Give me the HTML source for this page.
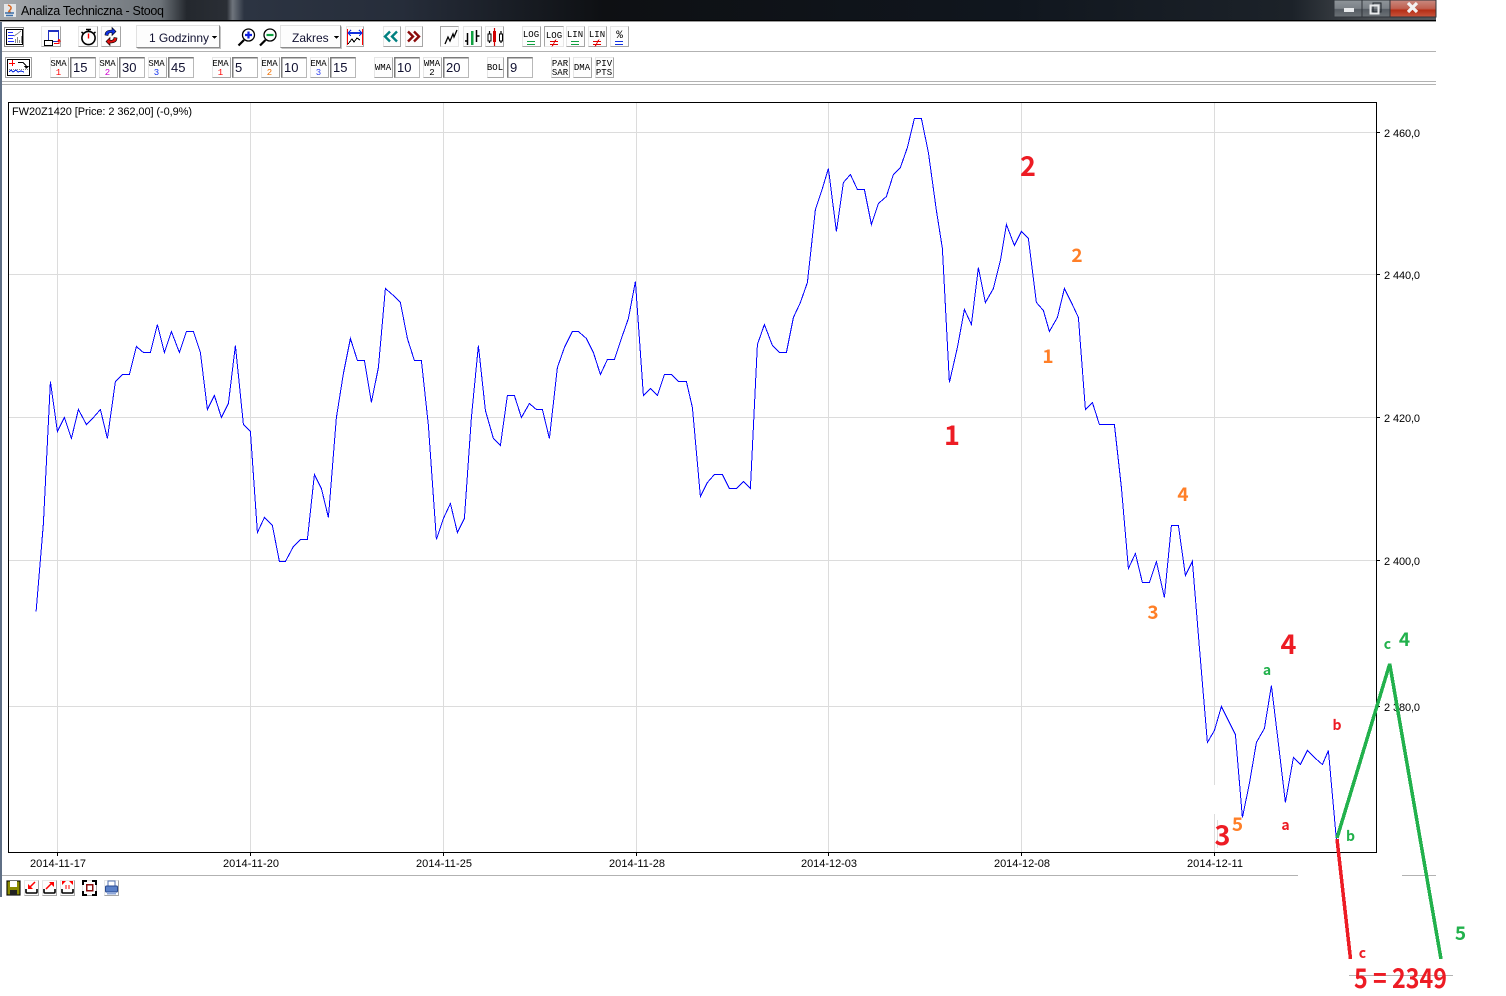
<!DOCTYPE html>
<html><head><meta charset="utf-8"><title>Analiza Techniczna - Stooq</title>
<style>
html,body{margin:0;padding:0;background:#fff;width:1506px;height:996px;overflow:hidden}
svg{position:absolute;left:0;top:0;display:block}
.b{fill:#fdfdfd;stroke:#e6e6e6;stroke-width:1}
.s{fill:none;stroke:#a6a6a6;stroke-width:1}
.i{fill:#fff;stroke:#b8b8b8;stroke-width:1}
.d{fill:none;stroke:#7c7c7c;stroke-width:1.5}
.t{font:13px "Liberation Sans",sans-serif;fill:#101030}
.m{font:9px "Liberation Mono",monospace;fill:#000;text-anchor:middle}
.a{font:11px "Liberation Sans",sans-serif;fill:#000}
.l{font-family:"Noto Sans CJK JP","Liberation Sans",sans-serif;font-weight:700;text-anchor:middle}
.r{fill:#ed1c24}.o{fill:#ff7f27}.g{fill:#22b14c}
.c{shape-rendering:crispEdges}
</style></head><body>
<svg width="1506" height="996" viewBox="0 0 1506 996" xmlns="http://www.w3.org/2000/svg">
<defs>
<linearGradient id="tb" x1="0" x2="1436" y1="0" y2="0" gradientUnits="userSpaceOnUse">
<stop offset="0" stop-color="#a4a8ac"/><stop offset=".05" stop-color="#8c9196"/><stop offset=".112" stop-color="#6c7278"/><stop offset=".13" stop-color="#24282e"/><stop offset=".158" stop-color="#2a2e35"/><stop offset=".162" stop-color="#6f757d"/><stop offset=".17" stop-color="#2c3442"/><stop offset=".28" stop-color="#262d3a"/><stop offset=".42" stop-color="#0e1013"/><stop offset=".7" stop-color="#10161e"/><stop offset=".9" stop-color="#1c2229"/><stop offset=".96" stop-color="#4c5054"/><stop offset="1" stop-color="#55585c"/>
</linearGradient>
<linearGradient id="bt" x1="0" x2="0" y1="0" y2="1"><stop offset="0" stop-color="#8f959a"/><stop offset=".5" stop-color="#7b8187"/><stop offset=".55" stop-color="#565c63"/><stop offset="1" stop-color="#6c7277"/></linearGradient>
<linearGradient id="rd" x1="0" x2="0" y1="0" y2="1"><stop offset="0" stop-color="#c98a80"/><stop offset=".5" stop-color="#c06050"/><stop offset=".6" stop-color="#b52f17"/><stop offset="1" stop-color="#c9553d"/></linearGradient>
</defs>

<!-- title bar -->
<rect x="0" y="0" width="1436" height="20" fill="url(#tb)"/>
<rect x="0" y="20" width="1436" height="1" fill="#000"/>
<rect x="0" y="21" width="1436" height="1" fill="#9a9a9a"/>
<rect x="0" y="22" width="2" height="875" fill="#5f6f85"/>
<text x="21" y="15" font-family="Liberation Sans,sans-serif" font-size="12.5" fill="#000" textLength="143">Analiza Techniczna - Stooq</text>
<g>
<rect x="4" y="4" width="12" height="13" fill="#e4e6e8"/>
<path d="M8 5q5 2 2 5t1 2" fill="none" stroke="#d8621a" stroke-width="1.4"/>
<path d="M5 13h9M6 15.5h7" stroke="#3b6fa8" stroke-width="1.4"/>
</g>
<!-- window controls -->
<rect x="1334" y="0" width="28" height="17" fill="url(#bt)" stroke="#30343a"/>
<rect x="1362" y="0" width="28" height="17" fill="url(#bt)" stroke="#30343a"/>
<rect x="1390" y="0" width="46" height="17" fill="url(#rd)" stroke="#30343a"/>
<rect x="1344" y="8" width="10" height="4" fill="#e8eaec"/>
<rect x="1373" y="3" width="8" height="9" fill="none" stroke="#20262c" stroke-width="1"/>
<rect x="1370.5" y="5.5" width="8" height="8" fill="none" stroke="#e8eaec" stroke-width="2"/>
<path d="M1408 3l9 9M1417 3l-9 9" stroke="#f2f2f2" stroke-width="3.2"/>

<!-- separators -->
<g class="c" fill="#b2b2b2">
<rect x="2" y="51" width="1434" height="1"/>
<rect x="2" y="81" width="1434" height="1"/>
<rect x="2" y="84" width="1434" height="1"/>
<rect x="2" y="875" width="1296" height="1"/>
<rect x="1402" y="875" width="34" height="1"/>
<rect x="1349" y="975" width="104" height="1"/>
</g>

<!-- toolbar 1 buttons -->
<g class="c">
<rect x="4.5" y="27.5" width="19" height="19" fill="#fff" stroke="#888"/>
<rect x="6.5" y="29.5" width="16" height="15" fill="#fff" stroke="#000"/>
<path d="M8 32.5h5M8 35.5h6M8 38.5h5M8 41.5h6" stroke="#2030ff"/>
<path d="M14 36l3-2 4-3" stroke="#999" fill="none"/>
<path d="M15.500 43v-4M17.500 43v-6M19.500 43v-3M21.500 43v-7" stroke="#8a8a8a"/>

<rect class="b" x="41.5" y="26.5" width="19" height="20"/><path class="s" d="M60.5 26.5v20h-19"/>
<rect x="48.5" y="30.5" width="10" height="11" fill="#fff" stroke="#2030c0"/><rect x="48" y="30" width="11" height="2" fill="#2030c0"/>
<rect x="44.5" y="40.5" width="8" height="5" fill="#fff" stroke="#000"/>
<path d="M54 43.500h5v-3M57.5 41.5l1.5-2 1.5 2" stroke="#f00" fill="none"/>

<rect class="b" x="78.5" y="26.5" width="19" height="20"/><path class="s" d="M97.5 26.5v20h-19"/>
<rect class="b" x="101.5" y="26.5" width="19" height="20"/><path class="s" d="M120.5 26.5v20h-19"/>
</g>
<circle cx="88.5" cy="38" r="6.6" fill="#fff" stroke="#000" stroke-width="1.6"/>
<path d="M88.5 33.5v5" stroke="#f00" stroke-width="1.4"/>
<path d="M86 29.5h5M88.5 29.5v2M81.5 32l2.5 2M95.5 32l-2.5 2" stroke="#000" stroke-width="1.5"/>
<path d="M105 35q0-5 7-5v-2.500l4 4-4 4v-3q-4 0-4 3z" fill="#1030e0" stroke="#000" stroke-width=".6"/>
<path d="M117 38q0 5-7 5v2.500l-4-4 4-4v3q4 0 4-3z" fill="#e01010" stroke="#000" stroke-width=".6"/>

<g class="c">
<rect x="136.500" y="25.500" width="83" height="22" fill="#fdfdfd" stroke="#e2e2e2"/><path d="M219.500 25.500v22h-83" fill="none" stroke="#8c8c8c"/><path d="M220.500 26.500v22h-83" fill="none" stroke="#c4c4c4"/>
<path d="M212 36h5l-2.500 3z" fill="#000"/>
<rect x="280.500" y="25.500" width="60" height="22" fill="#fdfdfd" stroke="#e2e2e2"/><path d="M340.500 25.500v22h-60" fill="none" stroke="#8c8c8c"/><path d="M341.500 26.500v22h-60" fill="none" stroke="#c4c4c4"/>
<path d="M334 36h5l-2.500 3z" fill="#000"/>
</g>
<text class="t" x="149" y="42" style="font-size:12px" textLength="60">1 Godzinny</text>
<text class="t" x="292" y="42" style="font-size:12px">Zakres</text>

<!-- magnifiers -->
<circle cx="248.500" cy="35" r="6" fill="#fff" stroke="#000" stroke-width="1.3"/>
<path d="M245 35h7M248.500 31.500v7" stroke="#1020e0" stroke-width="2.200"/>
<path d="M244 40l-5.500 5.500" stroke="#000" stroke-width="2.200"/>
<circle cx="270" cy="35" r="6" fill="#fff" stroke="#000" stroke-width="1.3"/>
<path d="M266.500 35h7" stroke="#10a040" stroke-width="2.200"/>
<path d="M265.500 40l-5.500 5.500" stroke="#000" stroke-width="2.200"/>

<!-- range icon -->
<g class="c">
<rect class="b" x="346.500" y="26.500" width="17" height="20"/><path class="s" d="M363.500 26.500v20h-17"/>
<path d="M347.500 29v16M362.500 29v16" stroke="#f00"/>
<path d="M349 33h12" stroke="#1030e0" stroke-width="2"/>
<path d="M351 30l-3 3 3 3M359 30l3 3-3 3" fill="none" stroke="#1030e0"/>
<path d="M348 44l4-5 2 3 3-4 3 2" fill="none" stroke="#000"/>
<rect class="b" x="383.500" y="26.500" width="17" height="20"/><path class="s" d="M400.500 26.500v20h-17"/>
<rect class="b" x="405.500" y="26.500" width="17" height="20"/><path class="s" d="M422.500 26.500v20h-17"/>
</g>
<path d="M390 31.500l-5 5 5 5M397 31.500l-5 5 5 5" fill="none" stroke="#008080" stroke-width="2.400"/>
<path d="M408 31.500l5 5-5 5M414 31.500l5 5-5 5" fill="none" stroke="#8b0a0a" stroke-width="2.400"/>

<!-- chart type -->
<g class="c">
<rect class="b" x="440.500" y="26.500" width="18" height="20"/><path d="M440.500 46.500v-20h18" fill="none" stroke="#a6a6a6"/>
<rect class="b" x="463.500" y="26.500" width="18" height="20"/><path class="s" d="M481.500 26.500v20h-18"/>
<rect class="b" x="485.500" y="26.500" width="18" height="20"/><path class="s" d="M503.500 26.500v20h-18"/>
</g>
<path d="M445 44l3-7 2 4 3-7 1 3 3-7" fill="none" stroke="#000" stroke-width="1.300"/>
<path d="M467.500 33v12M465 41h3M476.500 30v12M476.500 36h3" stroke="#000" stroke-width="1.500" fill="none"/>
<rect x="471" y="31" width="2.500" height="14" fill="#10a040"/>
<path d="M489.500 31v12M501 31v12" stroke="#000" stroke-width="1.200"/>
<rect x="488" y="34" width="3" height="7" fill="#fff" stroke="#000"/>
<rect x="499.500" y="34" width="3" height="7" fill="#fff" stroke="#000"/>
<path d="M494.500 28v18" stroke="#d00000" stroke-width="1.200"/><rect x="493" y="31" width="3" height="11" fill="#d00000"/>

<!-- LOG / LIN -->
<g class="c">
<rect class="b" x="522.500" y="26.500" width="18" height="20"/><path class="s" d="M540.500 26.500v20h-18"/>
<rect class="b" x="544.500" y="26.500" width="19" height="20"/><path d="M544.500 46.500v-20h19" fill="none" stroke="#a6a6a6"/>
<rect class="b" x="566.500" y="26.500" width="18" height="20"/><path class="s" d="M584.500 26.500v20h-18"/>
<rect class="b" x="588.500" y="26.500" width="18" height="20"/><path class="s" d="M606.500 26.500v20h-18"/>
<rect class="b" x="610.500" y="26.500" width="18" height="20"/><path class="s" d="M628.500 26.500v20h-18"/>
<path d="M527 41.500h8M527 44.500h8" stroke="#10a040"/>
<path d="M550 41.500h8M550 44.500h8M552 46.500l4-7" stroke="#e00000"/>
<path d="M571 41.500h8M571 44.500h8" stroke="#10a040"/>
<path d="M593 41.500h8M593 44.500h8M595 46.500l4-7" stroke="#e00000"/>
<path d="M615 41.500h8M615 44.500h8" stroke="#1030e0"/>
</g>
<text class="m" x="531" y="37">LOG</text>
<text class="m" x="554" y="38">LOG</text>
<text class="m" x="575" y="37">LIN</text>
<text class="m" x="597" y="37">LIN</text>
<text class="m" x="619.500" y="38" style="font-size:11px">%</text>

<!-- toolbar 2 -->
<g class="c">
<rect x="5.500" y="57.500" width="26" height="20" fill="#fff" stroke="#a0a0a0"/>
<rect x="7.500" y="59.500" width="22" height="16" fill="#fff" stroke="#000"/>
<path d="M9 69.500h19" stroke="#888" stroke-dasharray="1 1"/>
<path d="M9 72l2-2 2 2 3-2 2 2 3-1 3 1" fill="none" stroke="#1030e0"/>
<path d="M9 63.500h6M12.500 60v6" stroke="#f00"/>
<path d="M18 62.500h5l3 3v3" fill="none" stroke="#000"/><path d="M24 66h5l-2.500 3z" fill="#000"/>
</g>
<!-- buttons with labels -->
<g class="c">
<rect class="b" x="50.500" y="57.500" width="18" height="20"/><path class="s" d="M68.500 57.500v20h-18"/>
<rect class="b" x="99.500" y="57.500" width="18" height="20"/><path class="s" d="M117.500 57.500v20h-18"/>
<rect class="b" x="148.500" y="57.500" width="18" height="20"/><path class="s" d="M166.500 57.500v20h-18"/>
<rect class="b" x="212.500" y="57.500" width="18" height="20"/><path class="s" d="M230.500 57.500v20h-18"/>
<rect class="b" x="261.500" y="57.500" width="18" height="20"/><path class="s" d="M279.500 57.500v20h-18"/>
<rect class="b" x="310.500" y="57.500" width="18" height="20"/><path class="s" d="M328.500 57.500v20h-18"/>
<rect class="b" x="374.500" y="57.500" width="18" height="20"/><path class="s" d="M392.500 57.500v20h-18"/>
<rect class="b" x="423.500" y="57.500" width="18" height="20"/><path class="s" d="M441.500 57.500v20h-18"/>
<rect class="b" x="487.500" y="57.500" width="16" height="20"/><path class="s" d="M503.500 57.500v20h-16"/>
<rect class="b" x="551.500" y="57.500" width="18" height="20"/><path class="s" d="M569.500 57.500v20h-18"/>
<rect class="b" x="573.500" y="57.500" width="18" height="20"/><path class="s" d="M591.500 57.500v20h-18"/>
<rect class="b" x="595.500" y="57.500" width="18" height="20"/><path class="s" d="M613.500 57.500v20h-18"/>
</g>
<text class="m" x="58.500" y="66">SMA</text><text class="m" x="58.500" y="75" style="fill:#f00">1</text>
<text class="m" x="107.500" y="66">SMA</text><text class="m" x="107.500" y="75" style="fill:#d000d0">2</text>
<text class="m" x="156.500" y="66">SMA</text><text class="m" x="156.500" y="75" style="fill:#1030f0">3</text>
<text class="m" x="220.500" y="66">EMA</text><text class="m" x="220.500" y="75" style="fill:#f00">1</text>
<text class="m" x="269.500" y="66">EMA</text><text class="m" x="269.500" y="75" style="fill:#f07000">2</text>
<text class="m" x="318.500" y="66">EMA</text><text class="m" x="318.500" y="75" style="fill:#3040f0">3</text>
<text class="m" x="383" y="70">WMA</text>
<text class="m" x="432" y="66">WMA</text><text class="m" x="432" y="75">2</text>
<text class="m" x="495" y="70">BOL</text>
<text class="m" x="560" y="66">PAR</text><text class="m" x="560" y="75">SAR</text>
<text class="m" x="582" y="70">DMA</text>
<text class="m" x="604" y="66">PIV</text><text class="m" x="604" y="75">PTS</text>

<!-- inputs -->
<g class="c">
<rect class="i" x="70.500" y="57.500" width="25" height="20"/><path class="d" d="M70.500 77.500v-20h25"/>
<rect class="i" x="119.500" y="57.500" width="25" height="20"/><path class="d" d="M119.500 77.500v-20h25"/>
<rect class="i" x="168.500" y="57.500" width="25" height="20"/><path class="d" d="M168.500 77.500v-20h25"/>
<rect class="i" x="232.500" y="57.500" width="25" height="20"/><path class="d" d="M232.500 77.500v-20h25"/>
<rect class="i" x="281.500" y="57.500" width="25" height="20"/><path class="d" d="M281.500 77.500v-20h25"/>
<rect class="i" x="330.500" y="57.500" width="25" height="20"/><path class="d" d="M330.500 77.500v-20h25"/>
<rect class="i" x="394.500" y="57.500" width="25" height="20"/><path class="d" d="M394.500 77.500v-20h25"/>
<rect class="i" x="443.500" y="57.500" width="25" height="20"/><path class="d" d="M443.500 77.500v-20h25"/>
<rect class="i" x="507.500" y="57.500" width="25" height="20"/><path class="d" d="M507.500 77.500v-20h25"/>
</g>
<text class="t" x="73" y="72">15</text><text class="t" x="122" y="72">30</text><text class="t" x="171" y="72">45</text>
<text class="t" x="235" y="72">5</text><text class="t" x="284" y="72">10</text><text class="t" x="333" y="72">15</text>
<text class="t" x="397" y="72">10</text><text class="t" x="446" y="72">20</text><text class="t" x="510" y="72">9</text>

<!-- chart grid -->
<g class="c" stroke="#dcdcdc" stroke-width="1">
<path d="M9 132.500H1376M9 274.500H1376M9 417.500H1376M9 560.500H1376M9 706.500H1376"/>
<path d="M57.500 103V852M250.500 103V852M443.500 103V852M636.500 103V852M828.500 103V852M1021.500 103V852M1214.500 103V785M1214.500 814V852M1217.500 820V848"/>
</g>
<rect class="c" x="8.500" y="102.500" width="1368" height="750" fill="none" stroke="#000"/>
<g class="c" stroke="#000">
<path d="M57.500 853v3M250.500 853v3M443.500 853v3M636.500 853v3M828.500 853v3M1021.500 853v3M1214.500 853v3"/>
<path d="M1377 132.500h3M1377 274.500h3M1377 417.500h3M1377 560.500h3M1377 706.500h3"/>
</g>
<text class="a" x="12" y="115" textLength="180">FW20Z1420 [Price: 2 362,00] (-0,9%)</text>
<text class="a" x="30" y="867" textLength="56">2014-11-17</text>
<text class="a" x="223" y="867" textLength="56">2014-11-20</text>
<text class="a" x="416" y="867" textLength="56">2014-11-25</text>
<text class="a" x="609" y="867" textLength="56">2014-11-28</text>
<text class="a" x="801" y="867" textLength="56">2014-12-03</text>
<text class="a" x="994" y="867" textLength="56">2014-12-08</text>
<text class="a" x="1187" y="867" textLength="56">2014-12-11</text>
<text class="a" x="1384" y="137" textLength="36">2 460,0</text>
<text class="a" x="1384" y="279" textLength="36">2 440,0</text>
<text class="a" x="1384" y="422" textLength="36">2 420,0</text>
<text class="a" x="1384" y="565" textLength="36">2 400,0</text>
<text class="a" x="1384" y="711" textLength="36">2 380,0</text>

<!-- price -->
<polyline class="c" transform="translate(.4 .5)" fill="none" stroke="#0000ff" stroke-width="1" points="35.700,611 43,523 50,381 57,431 64,417 71,438 78,409 86,424 93,417 100,409 107,438 115,381 122,374 129,374 136,346 143,352 150,352 157,324 164,352 171,331 179,352 186,331 193,331 200,352 207,409 214,395 221,417 228,403 235,345 243,424 250,431 257,532 264,517 272,525 279,561 285,561 293,546 300,539 307,539 314,474 321,488 328,517 336,417 343,373 350,338 357,360 364,360 371,402 378,367 385,288 393,295 400,302 407,338 414,360 421,360 428,425 436,539 443,518 450,503 457,532 464,518 471,417 478,345 485,410 493,438 500,445 507,395 514,395 521,417 529,403 536,409 542,409 549,438 557,367 564,347 572,331 578,331 586,338 593,352 600,374 607,359 614,359 621,338 628,318 635,281 643,395 650,388 657,395 664,374 671,374 678,381 686,381 692,407 700,496 707,482 714,474 722,474 729,488 736,488 743,481 750,488 757,344 764,324 772,345 779,352 786,352 793,317 800,302 807,282 815,209 822,188 828,168 836,231 843,182 850,174 857,189 864,189 871,224 878,203 886,196 893,174 900,167 907,147 914,118 921,118 928,152 936,210 942,248 949,382 957,347 964,309 971,324 978,267 985,302 993,288 1000,260 1006,224 1014,245 1021,231 1028,238 1036,302 1043,310 1049,331 1057,317 1064,288 1071,302 1078,317 1085,409 1092,402 1099,424 1107,424 1114,424 1121,487 1128,568 1135,553 1142,582 1149,582 1156,561 1164,597 1171,525 1178,525 1185,575 1192,561 1199,647 1207,742 1214,730 1221,706 1228,720 1235,734 1242,817 1249,783 1256,742 1264,728 1271,685 1278,743 1285,802 1293,757 1300,764 1307,750 1314,757 1322,764 1328,750 1336,839"/>

<!-- hand drawn forecast -->
<path class="c" d="M1337 839L1350.500 959" fill="none" stroke="#ed1c24" stroke-width="3.500"/>
<path class="c" d="M1337 838L1389.700 664L1441 959" fill="none" stroke="#22b14c" stroke-width="3.500"/>

<!-- wave labels -->
<g class="l r" style="font-size:27px">
<text x="1028" y="176">2</text><text x="952" y="445">1</text><text x="1288.500" y="654">4</text><text x="1222.500" y="845">3</text>
<text x="1400.500" y="988" textLength="93" lengthAdjust="spacingAndGlyphs">5 = 2349</text>
</g>
<g class="l o" style="font-size:19px">
<text x="1077" y="262">2</text><text x="1048" y="363">1</text><text x="1183" y="501">4</text><text x="1153" y="619">3</text><text x="1237.500" y="831">5</text>
</g>
<g class="l g" style="font-size:19px">
<text x="1404.500" y="646">4</text><text x="1460.500" y="940">5</text>
</g>
<g class="l g" style="font-size:14px">
<text x="1387.500" y="649">c</text><text x="1267" y="675">a</text><text x="1350.500" y="841">b</text>
</g>
<g class="l r" style="font-size:14px">
<text x="1285.500" y="830">a</text><text x="1337" y="730">b</text><text x="1362.500" y="958">c</text>
</g>

<!-- bottom icons -->
<g class="c">
<rect class="b" x="6.500" y="880.500" width="14" height="15"/>
<rect x="7" y="881" width="13" height="14" fill="#8a8a00" stroke="#000"/>
<rect x="10" y="881" width="7" height="6" fill="#fff"/><rect x="10" y="890" width="7" height="5" fill="#222"/>
<rect class="b" x="24.500" y="880.500" width="14" height="15"/><path class="s" d="M38.500 880.500v15h-14"/>
<rect class="b" x="42.500" y="880.500" width="14" height="15"/><path class="s" d="M56.500 880.500v15h-14"/>
<rect class="b" x="60.500" y="880.500" width="14" height="15"/><path class="s" d="M74.500 880.500v15h-14"/>
<rect class="b" x="82.500" y="880.500" width="14" height="15"/><path class="s" d="M96.500 880.500v15h-14"/>
<rect class="b" x="104.500" y="880.500" width="14" height="15"/><path class="s" d="M118.500 880.500v15h-14"/>
</g>
<path d="M26 889v3q0 1 1 1h9q1 0 1-1v-3M44 889v3q0 1 1 1h9q1 0 1-1v-3M62 889v3q0 1 1 1h9q1 0 1-1v-3" fill="none" stroke="#000" stroke-width="1.600"/>
<path d="M35 882l-5 5" stroke="#f00" stroke-width="1.500"/><path d="M28 884v5h5z" fill="#f00"/>
<path d="M46 889l6-6" stroke="#f00" stroke-width="1.500"/><path d="M49 882h5v5z" fill="#f00"/>
<path d="M62 881h4l-4 4zM73 881h-4l4 4z" fill="#f00"/><path d="M66 885v4M69 885v4" stroke="#f00"/>
<path class="c" d="M83 885v-4h4M92 881h4v4M96 891v4h-4M87 895h-4v-4" fill="none" stroke="#000" stroke-width="2"/>
<rect class="c" x="86.500" y="884.500" width="6" height="6" fill="none" stroke="#8b0a0a" stroke-width="1.500"/>
<rect x="108" y="881" width="7" height="6" fill="#fff" stroke="#5070b0"/>
<rect x="105.500" y="886" width="12" height="6" rx="1" fill="#5a80c8" stroke="#2a4a90"/>
<rect x="107" y="892" width="9" height="2.500" fill="#90a8d8"/>
</svg>
</body></html>
